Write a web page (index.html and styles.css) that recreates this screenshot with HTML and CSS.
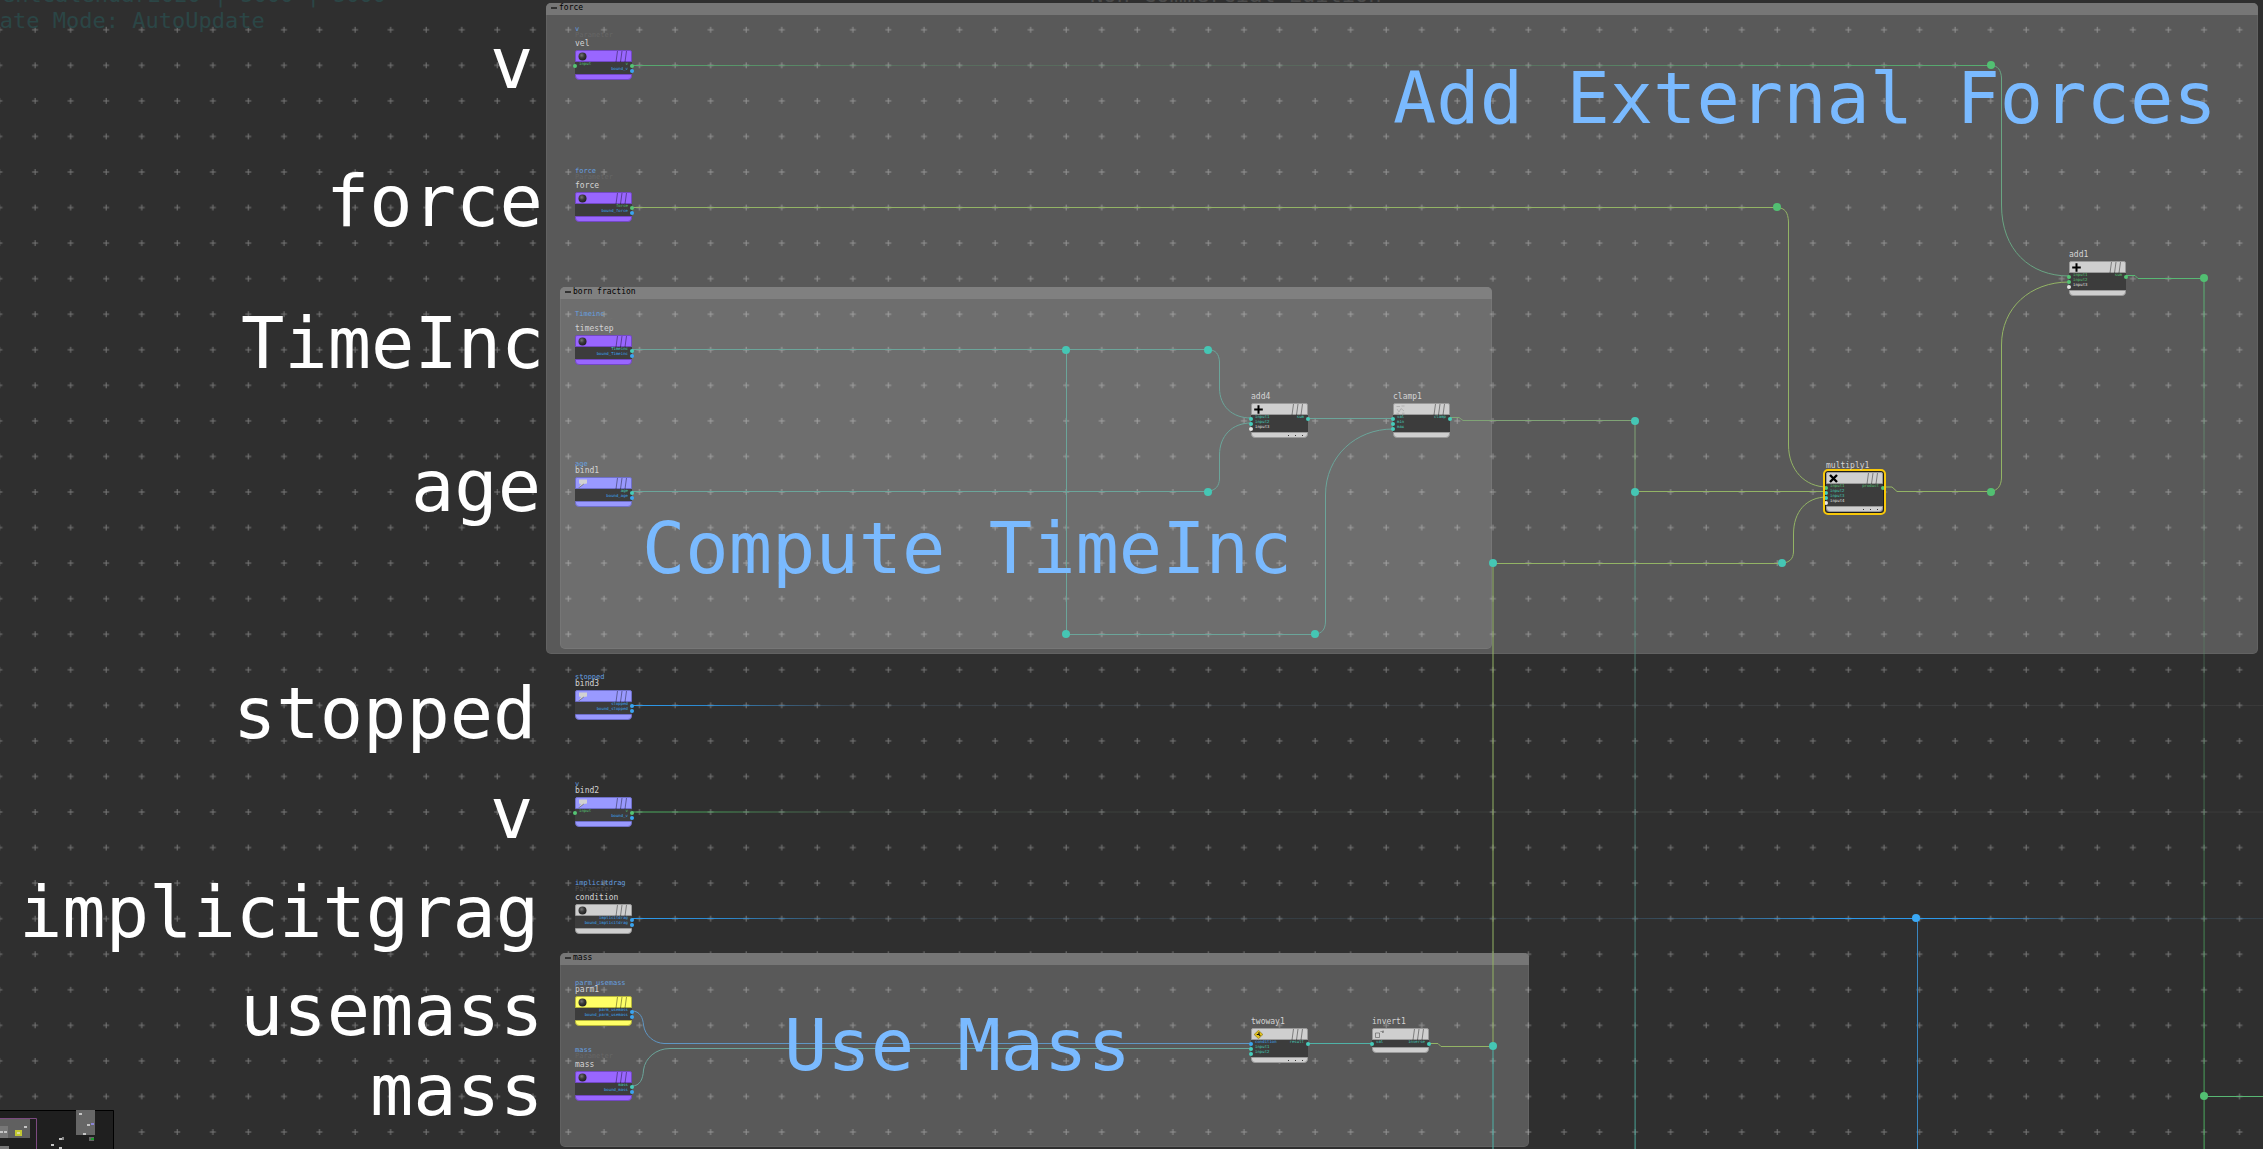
FILE: index.html
```html
<!DOCTYPE html>
<html lang="en">
<head>
    <meta charset="UTF-8" />
    <meta name="viewport" content="width=device-width, initial-scale=1.0" />
    <title>Network View</title>
    <link rel="stylesheet" href="styles.css">
</head>
<body>
    <!-- Shared icons -->
    <svg class="defs" aria-hidden="true">
        <defs>
            <radialGradient id="ball" cx="40%" cy="35%" r="65%">
                <stop offset="0" stop-color="#777" />
                <stop offset="0.5" stop-color="#3a3a3a" />
                <stop offset="1" stop-color="#222" />
            </radialGradient>
            <symbol id="i-param" viewBox="0 0 9 9"><circle cx="4.5" cy="4.5" r="4" fill="url(#ball)" /></symbol>
            <symbol id="i-bind" viewBox="0 0 9 9">
                <path d="M1 .5 L9 .5 L9 4.6 L5.8 5 L.5 9 L3 5 L1 4.4 Z" fill="#d2d2d2" />
                <path d="M.5 9 L5.8 5" stroke="#555" stroke-width=".6" fill="none" />
            </symbol>
            <symbol id="i-add" viewBox="0 0 9 9"><path d="M4.5 .2 V8.8 M.2 4.5 H8.8" stroke="#000" stroke-width="2" /></symbol>
            <symbol id="i-mul" viewBox="0 0 9 9"><path d="M1 1 L8 8 M8 1 L1 8" stroke="#000" stroke-width="2.4" /></symbol>
            <symbol id="i-clamp" viewBox="0 0 9 9">
                <path d="M.5 1.5 H4 M5.5 1 H8.5 M1 4 L3 7 L5 3.5 L8 6 M.5 8.2 H3 M6 8.2 H8.5" stroke="#aaa" stroke-width=".8" fill="none" />
            </symbol>
            <symbol id="i-two" viewBox="0 0 9 9">
                <path d="M4.5 .3 L8.9 4.5 L4.5 8.7 L.1 4.5 Z" fill="#e2c21c" stroke="#6b5a10" stroke-width=".5" />
                <path d="M5 2.2 V4.5 L6.2 6 M5 4.5 L2.8 4.5" stroke="#111" stroke-width="1.2" fill="none" />
            </symbol>
            <symbol id="i-inv" viewBox="0 0 9 9">
                <path d="M.5 3 H4.5 V7.5 H.5 Z M5.5 1.5 H6.8 M7.5 3 V1 H8.8 V3" stroke="#666" stroke-width=".7" fill="none" />
            </symbol>
            <symbol id="i-flags" viewBox="0 0 14 11">
                <path d="M1 11 L2.5 0 M5.5 11 L7 0 M10 11 L11.5 0" stroke="#000" stroke-opacity=".5" stroke-width=".8" />
            </symbol>
        </defs>
    </svg>

    <main class="network">
        <svg class="grid" aria-hidden="true">
            <defs>
                <pattern id="cross" x="-18.5" y="12" width="35.556" height="35.556" patternUnits="userSpaceOnUse">
                    <path d="M15 17.8 H21 M18 14.8 V20.8" stroke="#777" stroke-width="1" />
                </pattern>
            </defs>
            <rect width="100%" height="100%" fill="url(#cross)" />
        </svg>

        <header class="status">
            <p class="stat">entCalendar2020 | 5000 | 5000</p>
            <p class="stat mode">Update Mode: AutoUpdate</p>
            <p class="edition">Non-Commercial Edition</p>
        </header>

        <!-- Network boxes -->
        <section class="box" id="box-force"><h2>force</h2></section>
        <section class="box inner" id="box-born"><h2>born fraction</h2></section>
        <section class="box" id="box-mass"><h2>mass</h2></section>

        <!-- Wires -->
        <svg class="wires" aria-hidden="true">
            <defs>
                <linearGradient id="g-vel" gradientUnits="userSpaceOnUse" x1="632" y1="0" x2="1991" y2="0">
                    <stop offset="0" stop-color="#57ad70" />
                    <stop offset="0.2" stop-color="#57ad70" stop-opacity=".25" />
                    <stop offset="0.6" stop-color="#57ad70" stop-opacity=".15" />
                    <stop offset="0.85" stop-color="#57ad70" stop-opacity=".8" />
                    <stop offset="1" stop-color="#57ad70" />
                </linearGradient>
                <linearGradient id="g-stopped" gradientUnits="userSpaceOnUse" x1="632" y1="0" x2="2263" y2="0">
                    <stop offset="0" stop-color="#2c9cf0" />
                    <stop offset="0.05" stop-color="#2c9cf0" stop-opacity=".8" />
                    <stop offset="0.14" stop-color="#56799a" stop-opacity=".2" />
                    <stop offset="1" stop-color="#777" stop-opacity=".15" />
                </linearGradient>
                <linearGradient id="g-bind2" gradientUnits="userSpaceOnUse" x1="632" y1="0" x2="2263" y2="0">
                    <stop offset="0" stop-color="#4cb060" />
                    <stop offset="0.05" stop-color="#4cb060" stop-opacity=".8" />
                    <stop offset="0.16" stop-color="#6a8a70" stop-opacity=".2" />
                    <stop offset="1" stop-color="#777" stop-opacity=".15" />
                </linearGradient>
                <linearGradient id="g-cond" gradientUnits="userSpaceOnUse" x1="632" y1="0" x2="2263" y2="0">
                    <stop offset="0" stop-color="#2c9cf0" />
                    <stop offset="0.06" stop-color="#2c9cf0" stop-opacity=".8" />
                    <stop offset="0.15" stop-color="#4c7899" stop-opacity=".2" />
                    <stop offset="0.6" stop-color="#4c7899" stop-opacity=".2" />
                    <stop offset="0.74" stop-color="#2c9cf0" />
                    <stop offset="0.82" stop-color="#2c9cf0" />
                    <stop offset="0.9" stop-color="#4c7899" stop-opacity=".3" />
                    <stop offset="1" stop-color="#4c7899" stop-opacity=".2" />
                </linearGradient>
                <linearGradient id="g-sum" gradientUnits="userSpaceOnUse" x1="0" y1="278" x2="0" y2="1149">
                    <stop offset="0" stop-color="#58b874" />
                    <stop offset="0.25" stop-color="#6c8f77" stop-opacity=".5" />
                    <stop offset="0.5" stop-color="#4f8a60" stop-opacity=".5" />
                    <stop offset="0.85" stop-color="#4cb060" stop-opacity=".8" />
                    <stop offset="1" stop-color="#4cb060" />
                </linearGradient>
                <linearGradient id="g-clamp" gradientUnits="userSpaceOnUse" x1="0" y1="492" x2="0" y2="1149">
                    <stop offset="0" stop-color="#5c9f88" />
                    <stop offset="0.4" stop-color="#4d7f74" stop-opacity=".7" />
                    <stop offset="1" stop-color="#49a89a" />
                </linearGradient>
            </defs>

            <path stroke="url(#g-vel)" d="M632 65.5 H1990 V65" />
            <path class="mint" d="M1991 65 C1998 66 2001 70 2001.5 78 V205 C2001.5 250 2030 276 2069 276" />
            <path class="lime" d="M632 207.5 H1777 C1785 208 1788 212 1788.5 222 V445 C1788.5 470 1805 487 1827 487" />
            <path class="lime" d="M1883 487 H1892 L1897 491.5 H1991 C1998 490 2001 486 2001.5 478 V345 C2001.5 308 2030 282 2069 282" />
            <path class="green" d="M2126 275.5 H2135 L2138 278.5 H2204" />
            <path stroke="url(#g-sum)" d="M2204 279 L2204.1 1149" />
            <path class="green" d="M2204 1096.5 H4000" />

            <path class="aqua" d="M632 349.5 H1208 C1216 350 1219 354 1219.5 362 V388 C1219.5 406 1232 418 1251 418" />
            <path class="aqua" d="M1066.5 350 V634.5 H1315 C1322 633 1325 630 1325.5 622 V495 C1325.5 456 1356 429 1393 429" />
            <path class="aqua" d="M632 491.5 H1208 C1216 490 1219 486 1219.5 479 V455 C1219.5 436 1232 423 1251 423" />
            <path class="aqua" d="M1308 418.5 H1393" />
            <path class="olive" d="M1450 417.5 H1459 L1463 420.5 H1635 V492" />
            <path class="lime" d="M1635 491.5 H1827" />
            <path stroke="url(#g-clamp)" d="M1635 492 L1635.1 1149" />
            <path class="lime" d="M1493 1046 V563.5 H1782 C1790 562 1793 559 1793.5 552 V534 C1793.5 512 1806 497 1827 497" />
            <path class="lime" d="M1429 1043.5 H1438 L1441 1046.5 H1493" />
            <path class="teal" d="M1493 1046 V1149" />

            <path stroke="url(#g-stopped)" d="M632 705.5 L4000 705.6" />
            <path stroke="url(#g-bind2)" d="M632 812 L4000 812.1" />
            <path stroke="url(#g-cond)" d="M632 918.5 L4000 918.6" />
            <path class="blue" d="M1917.5 918 V1149" />

            <path class="steel" d="M632 1011 C640 1011 643 1018 643.5 1025 C645 1036 654 1043 664 1043.5 H1251" />
            <path class="aqua" d="M632 1086 C640 1086 643 1079 643.5 1070 C645 1058 656 1048.5 670 1048.5 H1251" />
            <path class="teal" d="M1308 1043.5 H1372" />

            <g class="green-dots">
                <circle cx="1991" cy="65" r="4" />
                <circle cx="1777" cy="207" r="4" />
                <circle cx="1991" cy="492" r="4" />
                <circle cx="2204" cy="278" r="4" />
                <circle cx="2204" cy="1096" r="4" />
            </g>
            <g class="teal-dots">
                <circle cx="1066" cy="350" r="4" />
                <circle cx="1208" cy="350" r="4" />
                <circle cx="1208" cy="492" r="4" />
                <circle cx="1066" cy="634" r="4" />
                <circle cx="1315" cy="634" r="4" />
                <circle cx="1635" cy="421" r="4" />
                <circle cx="1635" cy="492" r="4" />
                <circle cx="1493" cy="563" r="4" />
                <circle cx="1782" cy="563" r="4" />
                <circle cx="1493" cy="1046" r="4" />
            </g>
            <circle class="blue-dot" cx="1916" cy="918" r="4" />
        </svg>

        <!-- Nodes -->
        <article class="node purple" id="vel">
            <div class="caption"><p class="tag">v</p><p class="type">Parameter</p><h3>vel</h3></div>
            <div class="head"><svg><use href="#i-param" /></svg><svg class="flags"><use href="#i-flags" /></svg></div>
            <div class="ports">
                <div class="row"><span class="in c-green">input</span><span class="out c-green">v</span></div>
                <div class="row"><span class="out c-blue">bound_v</span></div>
            </div>
            <div class="foot"></div>
        </article>

        <article class="node purple" id="force">
            <div class="caption"><p class="tag">force</p><p class="type">Parameter</p><h3>force</h3></div>
            <div class="head"><svg><use href="#i-param" /></svg><svg class="flags"><use href="#i-flags" /></svg></div>
            <div class="ports">
                <div class="row"><span class="out c-green">force</span></div>
                <div class="row"><span class="out c-blue">bound_force</span></div>
            </div>
            <div class="foot"></div>
        </article>

        <article class="node purple" id="timestep">
            <div class="caption"><p class="tag">Timeinc</p><p class="type">Parameter</p><h3>timestep</h3></div>
            <div class="head"><svg><use href="#i-param" /></svg><svg class="flags"><use href="#i-flags" /></svg></div>
            <div class="ports">
                <div class="row"><span class="out c-teal">Timeinc</span></div>
                <div class="row"><span class="out c-blue">bound_Timeinc</span></div>
            </div>
            <div class="foot"></div>
        </article>

        <article class="node violet" id="bind1">
            <div class="caption"><p class="tag">age</p><h3>bind1</h3></div>
            <div class="head"><svg><use href="#i-bind" /></svg><svg class="flags"><use href="#i-flags" /></svg></div>
            <div class="ports">
                <div class="row"><span class="out c-teal">age</span></div>
                <div class="row"><span class="out c-blue">bound_age</span></div>
            </div>
            <div class="foot"></div>
        </article>

        <article class="node violet" id="bind3">
            <div class="caption"><p class="tag">stopped</p><h3>bind3</h3></div>
            <div class="head"><svg><use href="#i-bind" /></svg><svg class="flags"><use href="#i-flags" /></svg></div>
            <div class="ports">
                <div class="row"><span class="out c-blue">stopped</span></div>
                <div class="row"><span class="out c-blue">bound_stopped</span></div>
            </div>
            <div class="foot"></div>
        </article>

        <article class="node violet" id="bind2">
            <div class="caption"><p class="tag">v</p><h3>bind2</h3></div>
            <div class="head"><svg><use href="#i-bind" /></svg><svg class="flags"><use href="#i-flags" /></svg></div>
            <div class="ports">
                <div class="row"><span class="in c-green">input</span><span class="out c-green">v</span></div>
                <div class="row"><span class="out c-blue">bound_v</span></div>
            </div>
            <div class="foot"></div>
        </article>

        <article class="node" id="condition">
            <div class="caption"><p class="tag">implicitdrag</p><p class="type">Parameter</p><h3>condition</h3></div>
            <div class="head"><svg><use href="#i-param" /></svg><svg class="flags"><use href="#i-flags" /></svg></div>
            <div class="ports">
                <div class="row"><span class="out c-blue">implicitdrag</span></div>
                <div class="row"><span class="out c-blue">bound_implicitdrag</span></div>
            </div>
            <div class="foot"></div>
        </article>

        <article class="node yellow" id="parm1">
            <div class="caption"><p class="tag">parm_usemass</p><h3>parm1</h3></div>
            <div class="head"><svg><use href="#i-param" /></svg><svg class="flags"><use href="#i-flags" /></svg></div>
            <div class="ports">
                <div class="row"><span class="out c-blue">parm_usemass</span></div>
                <div class="row"><span class="out c-blue">bound_parm_usemass</span></div>
            </div>
            <div class="foot"></div>
        </article>

        <article class="node purple" id="mass">
            <div class="caption"><p class="tag">mass</p><p class="type">Parameter</p><h3>mass</h3></div>
            <div class="head"><svg><use href="#i-param" /></svg><svg class="flags"><use href="#i-flags" /></svg></div>
            <div class="ports">
                <div class="row"><span class="out c-teal">mass</span></div>
                <div class="row"><span class="out c-blue">bound_mass</span></div>
            </div>
            <div class="foot"></div>
        </article>

        <article class="node" id="add4">
            <div class="caption"><h3>add4</h3></div>
            <div class="head"><svg><use href="#i-add" /></svg><svg class="flags"><use href="#i-flags" /></svg></div>
            <div class="ports">
                <div class="row"><span class="in c-teal">input1</span><span class="out c-teal">sum</span></div>
                <div class="row"><span class="in c-teal">input2</span></div>
                <div class="row"><span class="in c-white">input3</span></div>
            </div>
            <div class="foot more"></div>
        </article>

        <article class="node" id="clamp1">
            <div class="caption"><h3>clamp1</h3></div>
            <div class="head"><svg><use href="#i-clamp" /></svg><svg class="flags"><use href="#i-flags" /></svg></div>
            <div class="ports">
                <div class="row"><span class="in c-teal">val</span><span class="out c-teal">clamp</span></div>
                <div class="row"><span class="in c-teal">min</span></div>
                <div class="row"><span class="in c-teal">max</span></div>
            </div>
            <div class="foot"></div>
        </article>

        <article class="node selected" id="multiply1">
            <div class="caption"><h3>multiply1</h3></div>
            <div class="head"><svg><use href="#i-mul" /></svg><svg class="flags"><use href="#i-flags" /></svg></div>
            <div class="ports">
                <div class="row"><span class="in c-green">input1</span><span class="out c-green">product</span></div>
                <div class="row"><span class="in c-teal">input2</span></div>
                <div class="row"><span class="in c-teal">input3</span></div>
                <div class="row"><span class="in c-white">input4</span></div>
            </div>
            <div class="foot more"></div>
        </article>

        <article class="node" id="add1">
            <div class="caption"><h3>add1</h3></div>
            <div class="head"><svg><use href="#i-add" /></svg><svg class="flags"><use href="#i-flags" /></svg></div>
            <div class="ports">
                <div class="row"><span class="in c-green">input1</span><span class="out c-green">sum</span></div>
                <div class="row"><span class="in c-green">input2</span></div>
                <div class="row"><span class="in c-white">input3</span></div>
            </div>
            <div class="foot"></div>
        </article>

        <article class="node" id="twoway1">
            <div class="caption"><h3>twoway1</h3></div>
            <div class="head"><svg><use href="#i-two" /></svg><svg class="flags"><use href="#i-flags" /></svg></div>
            <div class="ports">
                <div class="row"><span class="in c-blue">condition</span><span class="out c-teal">result</span></div>
                <div class="row"><span class="in c-teal">input1</span></div>
                <div class="row"><span class="in c-teal">input2</span></div>
            </div>
            <div class="foot more"></div>
        </article>

        <article class="node" id="invert1">
            <div class="caption"><h3>invert1</h3></div>
            <div class="head"><svg><use href="#i-inv" /></svg><svg class="flags"><use href="#i-flags" /></svg></div>
            <div class="ports">
                <div class="row"><span class="in c-teal">val</span><span class="out c-teal">inverse</span></div>
            </div>
            <div class="foot"></div>
        </article>

        <!-- Annotations -->
        <p class="note" id="note-v">v</p>
        <p class="note" id="note-force">force</p>
        <p class="note" id="note-timeinc">TimeInc</p>
        <p class="note" id="note-age">age</p>
        <p class="note" id="note-stopped">stopped</p>
        <p class="note" id="note-v2">v</p>
        <p class="note" id="note-drag">implicitgrag</p>
        <p class="note" id="note-usemass">usemass</p>
        <p class="note" id="note-mass">mass</p>
        <p class="note accent" id="note-forces">Add External Forces</p>
        <p class="note accent" id="note-compute">Compute TimeInc</p>
        <p class="note accent" id="note-use">Use Mass</p>

        <!-- Overview map -->
        <svg class="minimap" viewBox="0 0 114 39" aria-hidden="true">
            <rect width="114" height="39" fill="#1f1f1f" />
            <path d="M0 .5 H113.5 V39" stroke="#000" fill="none" />
            <rect x="76" y="0" width="19" height="25" fill="#666" />
            <rect x="0" y="9" width="30" height="19" fill="#606060" />
            <rect x="0" y="16" width="8" height="12" fill="#777" />
            <rect x="0" y="36" width="9" height="3" fill="#777" />
            <path d="M0 8.5 H36.5 V39" stroke="#7c4a80" fill="none" />
            <rect x="15" y="20" width="7" height="6" fill="#c2c832" />
            <rect x="17" y="22" width="3" height="2" fill="#d8d8a0" />
            <path d="M0 21h3v2h-3z M4 21h3v2h-3z M24 16h3v2h-3z M79 3h3v2h-3z M87 14h3v2h-3z M83 23h3v2h-3z M51 34h3v2h-3z M59 37h3v2h-3z M59 28h4v2h-4z" fill="#c4c4c4" />
            <rect x="91" y="13" width="3" height="2" fill="#8a84d8" />
            <rect x="62" y="27" width="2" height="3" fill="#888" />
            <rect x="89" y="27" width="5" height="4" fill="#666" />
            <rect x="91" y="28" width="3" height="2" fill="#1c9a2c" />
        </svg>
    </main>
</body>
</html>
```
FILE: styles.css
```css
* {
    box-sizing: border-box;
}

body {
    font-family: "DejaVu Sans Mono", "Liberation Mono", monospace;
    margin: 0;
    background: #2f2f2f;
    color: #c8c8c8;
}

h2, h3, p {
    margin: 0;
    font-weight: normal;
}

.defs {
    position: absolute;
    width: 0;
    height: 0;
}

.network {
    position: relative;
    height: 100vh;
    overflow: hidden;
}

.grid, .wires {
    position: absolute;
    left: 0;
    top: 0;
    width: 100%;
    height: 100%;
}

/* Viewport status text */

.status {
    font-size: 22px;
    line-height: 26px;
    white-space: nowrap;
    color: #2b4646;
}

.stat {
    position: absolute;
    left: 2px;
    top: -18px;
}

.mode {
    left: -40px;
    top: 8px;
}

.edition {
    position: absolute;
    left: 1090px;
    top: -18px;
    color: #4a4a4a;
}

/* Network boxes */

.box {
    position: absolute;
    background: rgba(255, 255, 255, 0.205);
    border-radius: 5px;
    box-shadow: inset 0 0 0 1px rgba(255, 255, 255, 0.06);
}

    .box h2 {
        display: flex;
        align-items: center;
        gap: 2px;
        height: 12px;
        padding: 0 0 2px 5px;
        background: #767676;
        border-radius: 5px 5px 0 0;
        color: #000;
        font-size: 8px;
        line-height: 10px;
    }

        .box h2::before {
            content: "";
            width: 6px;
            height: 2px;
            background: #333;
        }

.inner {
    background: rgba(255, 255, 255, 0.13);
}

    .inner h2 {
        background: #808080;
    }

#box-force { left: 546px; top: 3px; width: 1712px; height: 651px; }
#box-born { left: 560px; top: 287px; width: 932px; height: 362px; }
#box-mass { left: 560px; top: 953px; width: 969px; height: 194px; }

/* Wires */

.wires path {
    fill: none;
}

.mint { stroke: #69a583; }
.lime { stroke: #93b465; }
.olive { stroke: #80a476; }
.green { stroke: #58b874; }
.aqua { stroke: #6ba59a; }
.teal { stroke: #4fb3a8; }
.steel { stroke: #5f96c4; }
.blue { stroke: #3a86c0; }

.green-dots { fill: #52bf72; }
.teal-dots { fill: #45c6b4; }
.blue-dot { fill: #3aa8f5; }

/* Nodes */

.node {
    position: absolute;
    width: 57px;
    --skin: #cfcfcf;
    --edge: #9a9a9a;
}

.purple {
    --skin: #9966ff;
    --edge: #7348c4;
}

.violet {
    --skin: #9999ff;
    --edge: #6f6fc8;
}

.yellow {
    --skin: #ffff66;
    --edge: #b5b53c;
}

.caption {
    position: absolute;
    left: 0;
    bottom: 100%;
    padding-bottom: 1px;
    white-space: nowrap;
}

.tag {
    font-size: 7px;
    line-height: 4px;
    color: #66a0e0;
}

.type {
    font-size: 7px;
    line-height: 8px;
    color: rgba(120, 120, 120, 0.45);
}

.node h3 {
    font-size: 8px;
    line-height: 10px;
    color: #d4d4d4;
}

.head {
    display: flex;
    align-items: center;
    justify-content: space-between;
    height: 12px;
    padding: 0 2px;
    background: var(--skin);
    border: 1px solid var(--edge);
    border-radius: 2px 2px 0 0;
}

    .head svg {
        width: 9px;
        height: 9px;
    }

    .head .flags {
        width: 14px;
        height: 11px;
    }

.ports {
    padding-bottom: 2px;
    background: #3c3c3c;
}

.row {
    display: flex;
    justify-content: space-between;
    height: 5px;
    font-size: 4px;
    line-height: 4px;
}

.in, .out {
    display: flex;
    gap: 2px;
}

.in {
    margin-left: -2px;
}

.out {
    margin-left: auto;
    margin-right: -2px;
}

    .in::before, .out::after {
        content: "";
        width: 4px;
        height: 4px;
        margin-top: 2px;
        border-radius: 50%;
        background: currentColor;
    }

.c-green { color: #55c474; }
.c-teal { color: #45cdbb; }
.c-blue { color: #3aa4f0; }
.c-white { color: #e4e4e4; }

.foot {
    display: flex;
    align-items: center;
    justify-content: flex-end;
    height: 6px;
    padding-right: 4px;
    background: var(--skin);
    border: 1px solid var(--edge);
    border-radius: 0 0 4px 4px;
}

.more::after {
    content: "";
    width: 15px;
    height: 1px;
    background: repeating-linear-gradient(90deg, #333 0 1px, transparent 1px 7px);
}

.selected {
    outline: 2px solid #f8c808;
    outline-offset: 1px;
    border-radius: 2px;
    box-shadow: 0 0 0 1px #1c1c1c;
}

#vel { left: 575px; top: 50px; }
#force { left: 575px; top: 192px; }
#timestep { left: 575px; top: 335px; }
#bind1 { left: 575px; top: 477px; }
#bind3 { left: 575px; top: 690px; }
#bind2 { left: 575px; top: 797px; }
#condition { left: 575px; top: 904px; }
#parm1 { left: 575px; top: 996px; }
#mass { left: 575px; top: 1071px; }
#add4 { left: 1251px; top: 403px; }
#clamp1 { left: 1393px; top: 403px; }
#multiply1 { left: 1826px; top: 472px; }
#add1 { left: 2069px; top: 261px; }
#twoway1 { left: 1251px; top: 1028px; }
#invert1 { left: 1372px; top: 1028px; }

/* Annotations */

.note {
    position: absolute;
    font-size: 72px;
    line-height: 72px;
    white-space: nowrap;
    color: #fff;
}

.accent {
    color: #7abaff;
}

#note-v { left: 490px; top: 27px; }
#note-force { left: 326px; top: 165px; }
#note-timeinc { left: 241px; top: 307px; }
#note-age { left: 411px; top: 450px; }
#note-stopped { left: 233px; top: 677px; }
#note-v2 { left: 490px; top: 777px; }
#note-drag { left: 19px; top: 876px; }
#note-usemass { left: 240px; top: 974px; }
#note-mass { left: 370px; top: 1054px; }
#note-forces { left: 1393px; top: 62px; }
#note-compute { left: 642px; top: 512px; }
#note-use { left: 784px; top: 1009px; }

.minimap {
    position: absolute;
    left: 0;
    bottom: 0;
    width: 114px;
    height: 39px;
}
```
